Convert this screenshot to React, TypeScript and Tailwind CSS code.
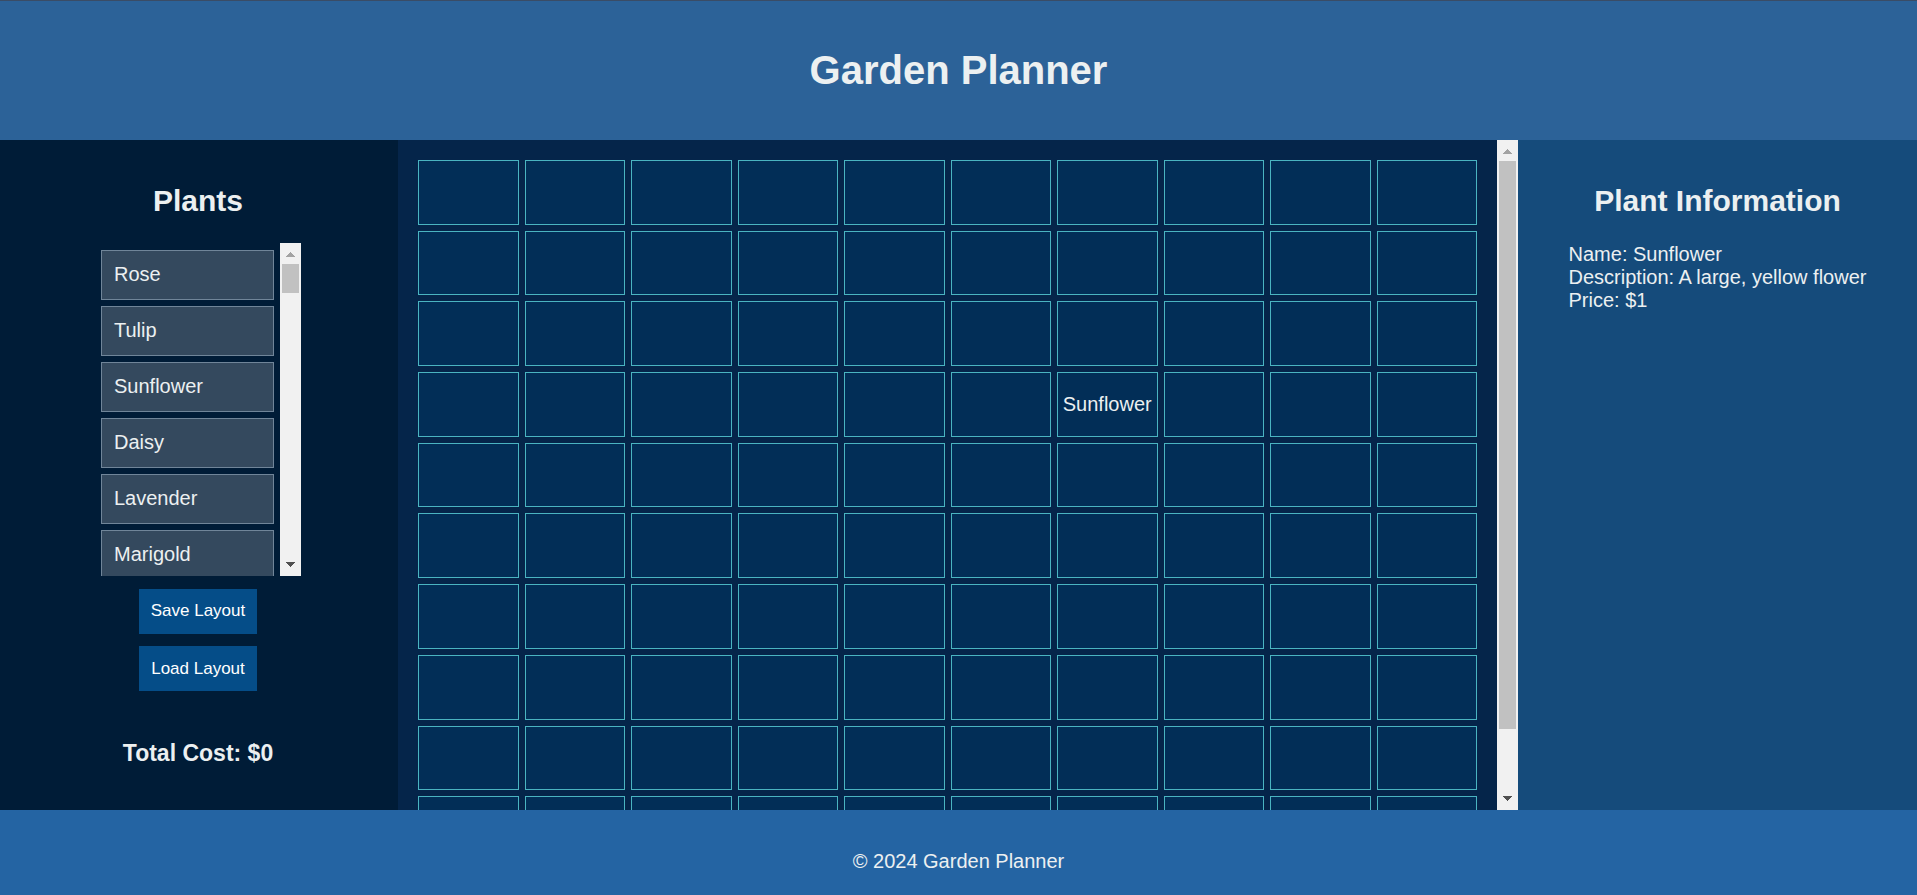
const plants = ["Rose", "Tulip", "Sunflower", "Daisy", "Lavender", "Marigold"];

const COLUMNS = 10;
const ROWS = 10;
const placed: Record<number, string> = { 36: "Sunflower" };

function Arrow({ down = false }: { down?: boolean }) {
  return (
    <svg
      viewBox="0 0 21 21"
      className={down ? "block h-[21px] w-[21px] fill-[#505050]" : "block h-[21px] w-[21px] fill-[#a3a3a3]"}
      shapeRendering="crispEdges"
      aria-hidden="true"
    >
      {down ? <path d="M6 7h9v1h-1v1h-1v1h-1v1h-1v1h-1v-1h-1v-1h-1v-1h-1v-1h-1z" /> : <path d="M6 14h9v-1h-1v-1h-1v-1h-1v-1h-1v-1h-1v1h-1v1h-1v1h-1v1h-1z" />}
    </svg>
  );
}

function ScrollBar({ visible, total }: { visible: number; total: number }) {
  return (
    <div className="flex w-[21px] shrink-0 flex-col bg-[#f1f1f1]" aria-hidden="true">
      <Arrow />
      <div className="min-h-0 flex-1 px-[2px]">
        <div className="bg-[#c1c1c1]" style={{ height: `${(visible / total) * 100}%` }} />
      </div>
      <Arrow down />
    </div>
  );
}

function Sidebar() {
  return (
    <aside className="flex w-[398px] shrink-0 flex-col items-center bg-[#001c37] pr-[2px]">
      <h2 className="mt-11 text-[30px] leading-[34px] font-bold">Plants</h2>
      <div className="mt-[25px] flex h-[333px] w-[206px] shrink-0">
        <ul className="flex min-w-0 flex-1 flex-col gap-[6px] overflow-hidden px-[6px] pt-[7px]">
          {plants.map((plant) => (
            <li
              key={plant}
              draggable
              className="h-[50px] shrink-0 cursor-grab border border-[#708599] bg-[#34495e] px-3 py-3 leading-[23px]"
            >
              {plant}
            </li>
          ))}
        </ul>
        <ScrollBar visible={1} total={10} />
      </div>
      <div className="mt-[13px] flex flex-col items-center gap-3">
        <button type="button" className="h-[45px] bg-[#054d88] px-3 pb-[2px] text-[17px] text-white">
          Save Layout
        </button>
        <button type="button" className="h-[45px] bg-[#054d88] px-3 text-[17px] text-white">
          Load Layout
        </button>
      </div>
      <h3 className="mt-[49px] text-[23px] leading-[27px] font-bold">Total Cost: $0</h3>
    </aside>
  );
}

function Garden() {
  return (
    <section className="flex min-w-0 flex-1 bg-[#05254a]" aria-label="Garden">
      <div className="min-w-0 flex-1 overflow-hidden p-5">
        <div className="grid h-[701px] grid-cols-10 grid-rows-10 gap-[6px]">
          {Array.from({ length: COLUMNS * ROWS }, (_, i) => (
            <div
              key={i}
              className="flex min-w-0 items-center justify-center border border-[#4ab4c1] bg-[#022e57]"
            >
              {placed[i]}
            </div>
          ))}
        </div>
      </div>
      <ScrollBar visible={670} total={741} />
    </section>
  );
}

function PlantInfo() {
  return (
    <aside className="flex w-[399px] shrink-0 flex-col items-center bg-[#154b7b]">
      <h2 className="mt-11 text-[30px] leading-[34px] font-bold">Plant Information</h2>
      <div className="mt-[25px] leading-[23px]">
        <p>Name: Sunflower</p>
        <p>Description: A large, yellow flower</p>
        <p>Price: $1</p>
      </div>
    </aside>
  );
}

export default function App() {
  return (
    <div className="flex h-screen flex-col font-['Liberation_Sans',Arial,sans-serif] text-[20px] text-[#ecf0f1]">
      <header className="border-t border-[#3a4c66] bg-[#2c6298] py-[46px] text-center">
        <h1 className="text-[40px] leading-[47px] font-bold">Garden Planner</h1>
      </header>
      <main className="flex min-h-0 flex-1">
        <Sidebar />
        <Garden />
        <PlantInfo />
      </main>
      <footer className="bg-[#2464a3] pt-10 pb-[22px] text-center leading-[23px]">
        <p>© 2024 Garden Planner</p>
      </footer>
    </div>
  );
}
